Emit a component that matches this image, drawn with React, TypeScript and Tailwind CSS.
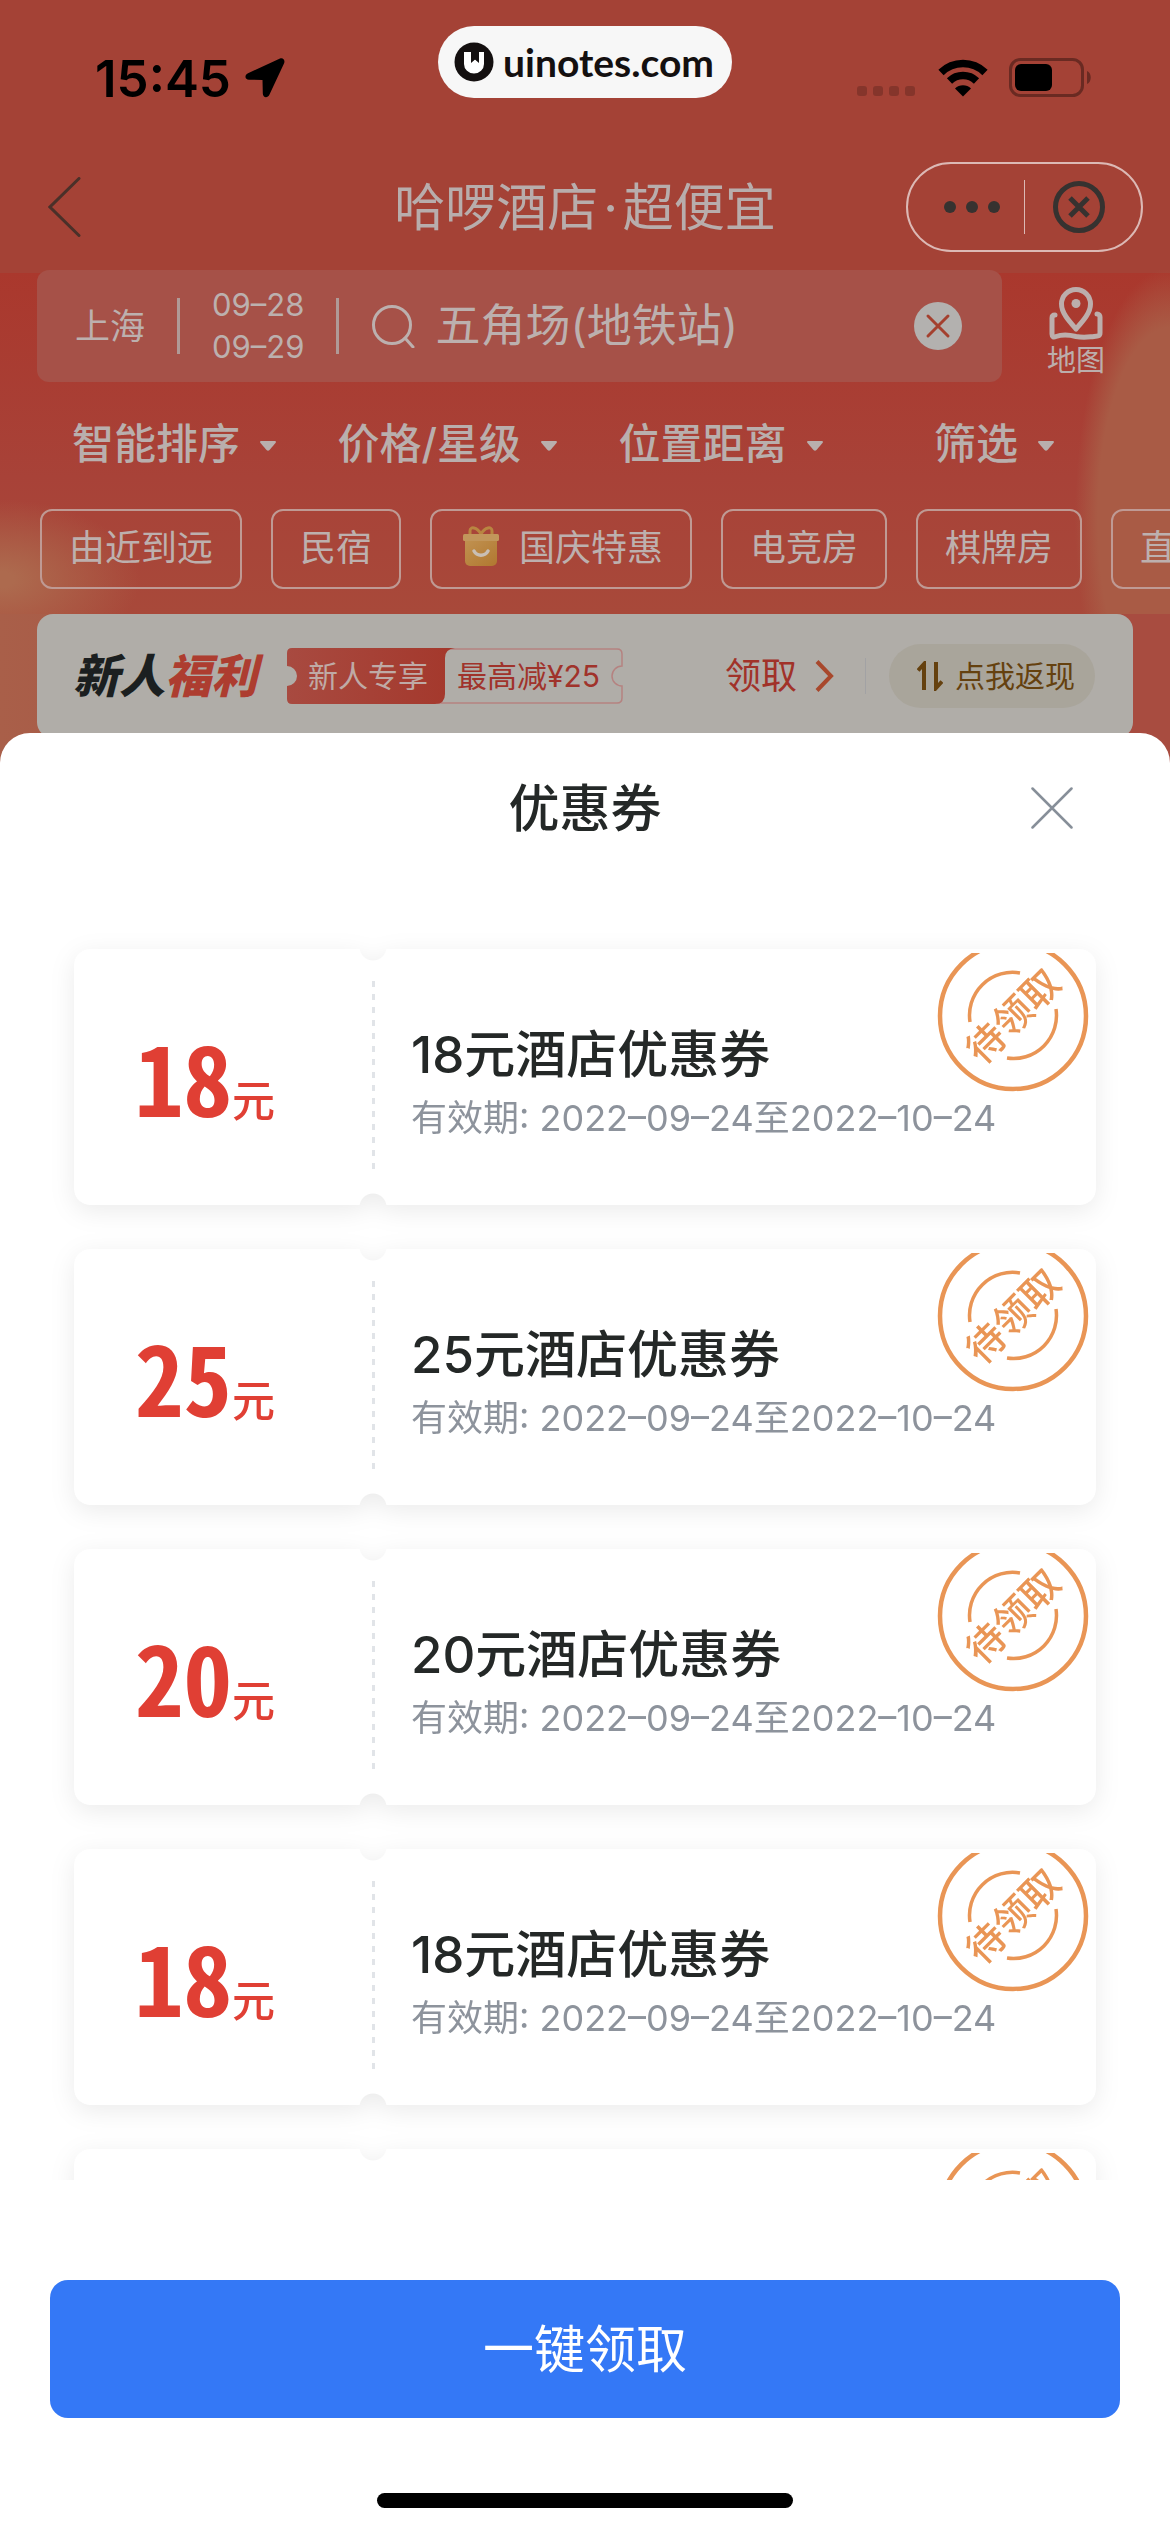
import React from 'react';

const filters = ['智能排序', '价格/星级', '位置距离', '筛选'];

const chips = [
  { label: '由近到远' },
  { label: '民宿' },
  { label: '国庆特惠', gift: true },
  { label: '电竞房' },
  { label: '棋牌房' },
  { label: '直播房' },
];

const coupons = [
  { id: 1, amount: 18 },
  { id: 2, amount: 25 },
  { id: 3, amount: 20 },
  { id: 4, amount: 18 },
  { id: 5, amount: 18 },
];

function StatusBar() {
  return (
    <div className="grid grid-cols-[1fr_auto_1fr] h-[124px] pt-[26px]">
      <div className="flex items-center gap-[14px] pl-[95px] h-[104px] text-black">
        <span className="text-[51px] leading-none font-semibold">15:45</span>
        <svg viewBox="0 0 40 40" className="w-10 h-10" fill="currentColor">
          <path d="M35 .6 3 15.2C-.8 17-.2 21.600 4 21.700L17.500 22l.3 13.500c.1 4.500 4.900 5 6.700 1.100L39 5.500C40.500 2.200 38 -.6 35 .6Z" />
        </svg>
      </div>
      <div className="flex items-center gap-[9px] h-[72px] pl-4 pr-[18px] rounded-full bg-[#f7f7f7] text-[#141010]">
        <svg viewBox="0 0 40 40" className="w-10 h-10">
          <circle cx="20" cy="20" r="19.500" fill="#141010" />
          <path d="M10 10h7v10l4-3 4 3V10h5v12a10 9.500 0 0 1-20 0Z" fill="#fff" />
          <path d="M17 10v11l4-3.500 4 3.500V10Z" fill="#141010" />
        </svg>
        <span className="font-[Lato] text-[39px] leading-none font-bold">uinotes.com</span>
      </div>
      <div className="flex items-center justify-end h-[104px] pr-[78px]">
        <svg viewBox="0 0 60 40" className="w-[60px] h-10 mr-5" fill="#85352b">
          <rect x="0" y="28" width="10" height="10" rx="3" />
          <rect x="16" y="28" width="10" height="10" rx="3" />
          <rect x="32" y="28" width="10" height="10" rx="3" />
          <rect x="48" y="28" width="10" height="10" rx="3" />
        </svg>
        <svg viewBox="0 0 52 38" className="w-[52px] h-[38px] mr-5" fill="none" stroke="#000">
          <path d="M4 13.500a31.500 31.500 0 0 1 44 0" strokeWidth="7.500" />
          <path d="M12.500 22a19.500 19.500 0 0 1 27 0" strokeWidth="7.500" />
          <path d="M18 29.500a11.500 11.500 0 0 1 16 0L26 37.500Z" fill="#000" stroke="none" />
        </svg>
        <svg viewBox="0 0 83 40" className="w-[83px] h-10">
          <rect x="1.500" y="1.500" width="72" height="36" rx="10" fill="none" stroke="#6a2a22" strokeWidth="3" />
          <rect x="6" y="6" width="37" height="27" rx="6" fill="#000" />
          <path d="M78 13c5 2 5 11 0 13Z" fill="#6a2a22" />
        </svg>
      </div>
    </div>
  );
}

function NavBar() {
  return (
    <div className="grid grid-cols-[1fr_auto_1fr] items-center h-[146px] pt-5">
      <button aria-label="返回" className="justify-self-start ml-12">
        <svg viewBox="0 0 34 60" className="w-[34px] h-[60px]" fill="none" stroke="#4a3029" strokeWidth="3" strokeLinecap="round">
          <path d="M31 1.500 2 30l29 28.500" />
        </svg>
      </button>
      <h1 className="text-[51px] leading-none text-[#b8adac]">
        哈啰酒店<span className="mx-[5px]">·</span>超便宜
      </h1>
      <div className="flex items-center justify-self-end mr-[27px] w-[237px] h-[90px] rounded-full border-2 border-[#dcb9b5] text-[#363230]">
        <button aria-label="更多" className="w-[116px] flex justify-center pl-3">
          <svg viewBox="0 0 56 12" className="w-14 h-3" fill="currentColor">
            <circle cx="6" cy="6" r="6" />
            <circle cx="28" cy="6" r="6" />
            <circle cx="50" cy="6" r="6" />
          </svg>
        </button>
        <span className="w-px h-[54px] bg-[#dcb9b5]" />
        <button aria-label="关闭" className="flex-1 flex justify-center pr-2">
          <svg viewBox="0 0 54 54" className="w-[54px] h-[54px]" fill="none" stroke="currentColor" strokeWidth="5">
            <circle cx="27" cy="27" r="23.500" />
            <path d="m18 18 18 18M36 18 18 36" />
          </svg>
        </button>
      </div>
    </div>
  );
}

function SearchRow() {
  return (
    <div className="flex items-center h-28 pl-[37px]">
      <div className="flex items-center flex-1 min-w-0 h-full rounded-xl bg-[#a65148] text-[#bcb0ae]">
        <button className="shrink-0 pl-[38px] pr-8 text-[35px] leading-none">上海</button>
        <span className="w-[3px] h-14 bg-[#b09a97]" />
        <div className="shrink-0 px-8 text-[31px] leading-[42px] text-center">
          <div>09–28</div>
          <div>09–29</div>
        </div>
        <span className="w-[3px] h-14 bg-[#b09a97]" />
        <svg viewBox="0 0 44 44" className="shrink-0 w-11 h-11 ml-8" fill="none" stroke="currentColor" strokeWidth="3" strokeLinecap="round">
          <circle cx="21" cy="21" r="18.500" />
          <path d="m34 34 8 9" />
        </svg>
        <input
          aria-label="搜索"
          defaultValue="五角场(地铁站)"
          className="flex-1 min-w-0 ml-5 h-16 bg-transparent outline-none text-[45px]"
        />
        <button aria-label="清空" className="shrink-0 mr-10">
          <svg viewBox="0 0 48 48" className="w-12 h-12" fill="none">
            <circle cx="24" cy="24" r="24" fill="#b3b1af" />
            <path d="m14 14 20 20M34 14 14 34" stroke="#a4402f" strokeWidth="3" strokeLinecap="round" />
          </svg>
        </button>
      </div>
      <a href="#map" className="flex shrink-0 flex-col items-center w-[168px] pt-3 pr-5 text-[#bcaeac]">
        <svg viewBox="0 0 54 54" className="w-[54px] h-[54px]" fill="none" stroke="currentColor" strokeWidth="5" strokeLinecap="round" strokeLinejoin="round">
          <path d="M27 43C20 35 12.500 27 12.500 18a14.500 14.500 0 0 1 29 0C41.500 27 34 35 27 43Z" />
          <circle cx="27" cy="17.500" r="4.500" fill="currentColor" stroke="none" />
          <path d="M6 29c-2.500 0-3 1.500-3 3v16c0 3 1.500 3.500 4 2.500 7-2.500 12-2 20 0 8 1.500 12 .5 18 0 4-.3 6-.5 6-3.500V31c0-1.500-1-3-3-3" />
        </svg>
        <span className="mt-1 text-[29px] leading-[34px]">地图</span>
      </a>
    </div>
  );
}

function FilterBar() {
  return (
    <div className="flex items-center h-[123px] pl-[72px] pr-[116px] justify-between text-[#b9afad]">
      {filters.map((label, i) => (
        <button key={label} className={i === 3 ? 'flex items-center gap-5 pl-[50px]' : 'flex items-center gap-5'}>
          <span className="text-[42px] leading-none font-medium">{label}</span>
          <svg viewBox="0 0 16 10" className="w-4 h-[10px] mt-1" fill="currentColor">
            <path d="M1.500 0h13c1.500 0 1.800 1 1 2L9.500 9c-1 1-2 1-3 0L.5 2C-.3 1 0 0 1.500 0Z" />
          </svg>
        </button>
      ))}
    </div>
  );
}

function GiftIcon() {
  return (
    <svg viewBox="0 0 36 44" className="w-9 h-11 ml-1" fill="none">
      <defs>
        <linearGradient id="gift" x1="0" y1="0" x2="1" y2="1">
          <stop offset="0" stopColor="#c09150" />
          <stop offset="1" stopColor="#b17830" />
        </linearGradient>
      </defs>
      <path d="M18 8C14 1 7 0 7 5v3M18 8c4-7 11-8 11-3v3" stroke="#b98541" strokeWidth="3" />
      <path d="M2 15h32v20a5 5 0 0 1-5 5H7a5 5 0 0 1-5-5Z" fill="url(#gift)" />
      <rect x="0" y="8" width="36" height="7" rx="1.500" fill="#c2965b" />
      <path d="M11 25c3 5.500 11 5.500 14 0" stroke="#c9bfb4" strokeWidth="3.500" strokeLinecap="round" />
    </svg>
  );
}

function ChipRow() {
  return (
    <div className="flex gap-[29px] h-[109px] pt-1 pl-10 overflow-hidden text-[#bdb0ae]">
      {chips.map((chip) => (
        <button key={chip.label} className="flex shrink-0 items-center gap-5 h-20 px-[27px] pb-[2px] rounded-xl border-2 border-[#bf9a94] text-[36px] leading-none">
          {chip.gift && <GiftIcon />}
          {chip.label}
        </button>
      ))}
    </div>
  );
}

function NewcomerBanner() {
  return (
    <div className="flex items-center h-[124px] mx-[37px] pl-9 pr-[38px] rounded-2xl bg-[#b0ada8]">
      <div className="text-[46px] leading-none font-black italic text-[#1b1f20]">
        新人<span className="text-[#ad3d30]">福利</span>
      </div>
      <div className="relative flex ml-[30px] h-14 text-[30px] leading-[56px]">
        <svg viewBox="0 0 336 56" className="absolute inset-0 w-[336px] h-14" fill="none">
          <defs>
            <linearGradient id="tag" x1="0" y1="0" x2="1" y2="0">
              <stop offset="0" stopColor="#a84a40" />
              <stop offset="1" stopColor="#a4382c" />
            </linearGradient>
          </defs>
          <path d="M158 1h172q5 0 5 5v12a10 10 0 0 0 0 20v12q0 5-5 5H150" stroke="#b58280" strokeWidth="1.500" />
          <path d="M5 0h163q-10 1-10 10v36q0 10-10 10H5q-5 0-5-5V38a9.500 9.500 0 0 0 0-20V5q0-5 5-5Z" fill="url(#tag)" />
        </svg>
        <span className="relative pl-[21px] w-[158px] text-[#bfaaa6]">新人专享</span>
        <span className="relative pl-3 w-[178px] text-[#a0332b]">最高减¥25</span>
      </div>
      <button className="flex items-center gap-[18px] ml-auto text-[36px] leading-none text-[#a13229]">
        领取
        <svg viewBox="0 0 20 32" className="w-5 h-8" fill="none" stroke="#a8482c" strokeWidth="4">
          <path d="m2 1.500 14 14.500L2 30.500" />
        </svg>
      </button>
      <span className="w-px h-9 ml-[30px] mr-[23px] bg-[#a2a2a4]" />
      <button className="flex items-center gap-3 h-16 w-[206px] pl-7 rounded-full bg-[#a9a59b] text-[30px] leading-none text-[#65410f]">
        <svg viewBox="0 0 26 30" className="w-[26px] h-[30px]" fill="none" stroke="currentColor" strokeWidth="4">
          <path d="M1 9.500 7 3v26M25 20.500 19 27V1" />
        </svg>
        点我返现
      </button>
    </div>
  );
}

function Stamp() {
  return (
    <svg viewBox="0 0 152 140" className="absolute top-1 right-[7px] w-[152px] h-[140px]" fill="none" stroke="#e99555">
      <circle cx="76" cy="63" r="73" strokeWidth="4.500" />
      <path d="M33 69A43 43 0 0 1 83 20M119 56A43 43 0 0 1 70 105" strokeWidth="3.500" />
      <text
        x="76"
        y="63"
        transform="rotate(-45 76 63)"
        textAnchor="middle"
        dominantBaseline="central"
        fill="#e99555"
        stroke="none"
        className="text-[38px] font-medium"
      >
        待领取
      </text>
    </svg>
  );
}

function Coupon({ amount }: { amount: number }) {
  return (
    <li className="shrink-0 drop-shadow-[0_6px_12px_rgba(0,0,0,0.08)]">
      <div className="relative flex h-64 rounded-2xl bg-white [mask-image:radial-gradient(circle_at_299px_-2px,transparent_13px,#000_14px),radial-gradient(circle_at_299px_258px,transparent_13px,#000_14px)] [mask-composite:intersect]">
        <div className="flex items-baseline justify-end w-[298px] pr-[97px] pt-[66px] text-[#e03f34]">
          <span className="font-['Noto_Sans_Mono_CJK_SC','Noto_Sans_CJK_SC',sans-serif] text-[97px] leading-[120px] font-bold">{amount}</span>
          <span className="text-[43px] leading-none font-medium">元</span>
        </div>
        <div className="my-8 w-[3px] bg-[repeating-linear-gradient(to_bottom,#e1e4e8_0_6px,transparent_6px_13px)]" />
        <div className="pl-9 pt-[76px]">
          <h3 className="text-[51px] leading-[60px] font-medium text-[#242827]">{amount}元酒店优惠券</h3>
          <p className="mt-2 text-[36px] leading-[50px] text-[#8d939c]">有效期: 2022–09–24至2022–10–24</p>
        </div>
        <Stamp />
      </div>
    </li>
  );
}

function CouponSheet() {
  return (
    <section className="relative flex flex-col flex-1 min-h-0 -mt-[5px] rounded-t-[30px] bg-white">
      <div className="grid grid-cols-[1fr_auto_1fr] items-center h-[150px] px-[97px]">
        <h2 className="col-start-2 text-[51px] leading-none font-medium text-[#242827]">优惠券</h2>
        <button aria-label="关闭优惠券" className="justify-self-end">
          <svg viewBox="0 0 42 42" className="w-[42px] h-[42px]" fill="none" stroke="#878f99" strokeWidth="2.500" strokeLinecap="round">
            <path d="m1.500 1.500 39 39M40.500 1.500l-39 39" />
          </svg>
        </button>
      </div>
      <ul className="flex flex-col flex-1 min-h-0 gap-[44px] mx-[50px] px-6 pt-[66px] overflow-hidden">
        {coupons.map((c) => (
          <Coupon key={c.id} amount={c.amount} />
        ))}
      </ul>
      <button className="mt-[100px] mx-[50px] h-[138px] rounded-[18px] bg-[#3478f6] text-[51px] leading-none text-white">
        一键领取
      </button>
      <div className="mt-[75px] mb-6 mx-auto w-[416px] h-[15px] rounded-full bg-black" />
    </section>
  );
}

export default function App() {
  return (
    <div className="flex flex-col h-screen overflow-hidden bg-[linear-gradient(to_right,#a95f49,#a84c40_40%,#a84c40)] font-[Inter,'Noto_Sans_CJK_SC',sans-serif]">
      <div className="bg-[#a44236]">
        <StatusBar />
        <NavBar />
      </div>
      <div className="bg-[radial-gradient(ellipse_95px_250px_at_100%_72%,#a95b45_76%,transparent),radial-gradient(ellipse_140px_80px_at_0%_90%,#ad6a4e_10%,transparent),linear-gradient(to_bottom,#a44236_3px,#aa382d_3px,#a84238_60%,#a8493a)]">
        <SearchRow />
        <FilterBar />
        <ChipRow />
      </div>
      <NewcomerBanner />
      <CouponSheet />
    </div>
  );
}
